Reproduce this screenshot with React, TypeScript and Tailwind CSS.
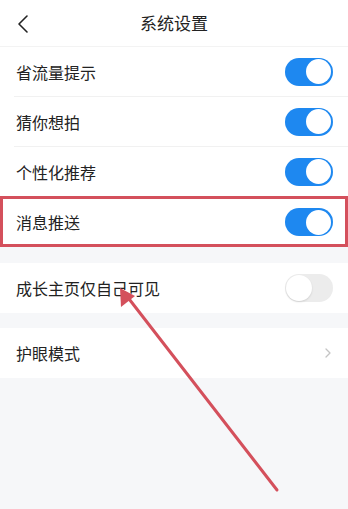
import React from "react";

function Toggle({ on }: { on: boolean }) {
  return on ? (
    <div className="w-[48px] h-[28px] rounded-full bg-[#1e88f0] flex items-center justify-end pr-[2px]">
      <div className="w-[25px] h-[25px] rounded-full bg-white" />
    </div>
  ) : (
    <div className="w-[48px] h-[28px] rounded-full bg-[#ececec] flex items-center justify-start pl-[1px]">
      <div className="w-[26px] h-[26px] rounded-full bg-white shadow-[0_1px_2px_rgba(0,0,0,0.12)]" />
    </div>
  );
}

function Row({ label, children, divider }: { label: string; children: React.ReactNode; divider?: boolean }) {
  return (
    <div className="bg-white pl-[14px]">
      <div className={`h-[50px] flex items-center justify-between pr-[15px] pl-[2px] ${divider ? "border-b border-[#f1f1f1]" : ""}`}>
        <span className="text-[16px] text-[#222]">{label}</span>
        {children}
      </div>
    </div>
  );
}

export default function App() {
  return (
    <div
      className="relative w-[348px] h-[509px] bg-[#f6f7f9] overflow-hidden"
      style={{ fontFamily: '"Noto Sans CJK SC", "Noto Sans", sans-serif' }}
    >
      <div className="h-[47px] bg-white relative flex items-center justify-center border-b border-[#f3f3f3]">
        <svg className="absolute left-[16px] top-[14px]" width="14" height="20" viewBox="0 0 14 20">
          <path d="M11 2 L3 10 L11 18" fill="none" stroke="#222" strokeWidth="1.6" strokeLinecap="round" strokeLinejoin="round" />
        </svg>
        <span className="text-[17px] text-[#222]">系统设置</span>
      </div>
      <Row label="省流量提示" divider>
        <Toggle on />
      </Row>
      <Row label="猜你想拍" divider>
        <Toggle on />
      </Row>
      <Row label="个性化推荐" divider>
        <Toggle on />
      </Row>
      <Row label="消息推送">
        <Toggle on />
      </Row>
      <div className="h-[16px]" />
      <Row label="成长主页仅自己可见">
        <Toggle on={false} />
      </Row>
      <div className="h-[15px]" />
      <Row label="护眼模式">
        <svg width="8" height="12" viewBox="0 0 8 12" className="mr-[1px]">
          <path d="M2 2 L6 6 L2 10" fill="none" stroke="#c4c4c4" strokeWidth="1.3" strokeLinecap="round" strokeLinejoin="round" />
        </svg>
      </Row>

      <div className="absolute left-0 top-[196px] w-[348px] h-[51px] border-[3px] border-[#d4505c] pointer-events-none" />

      <svg className="absolute left-0 top-0 pointer-events-none" width="348" height="509" viewBox="0 0 348 509">
        <line x1="277" y1="490" x2="126" y2="295" stroke="#d4505c" strokeWidth="3" strokeLinecap="round" />
        <polygon points="120,288 121,307 135,296" fill="#d4505c" />
      </svg>
    </div>
  );
}
